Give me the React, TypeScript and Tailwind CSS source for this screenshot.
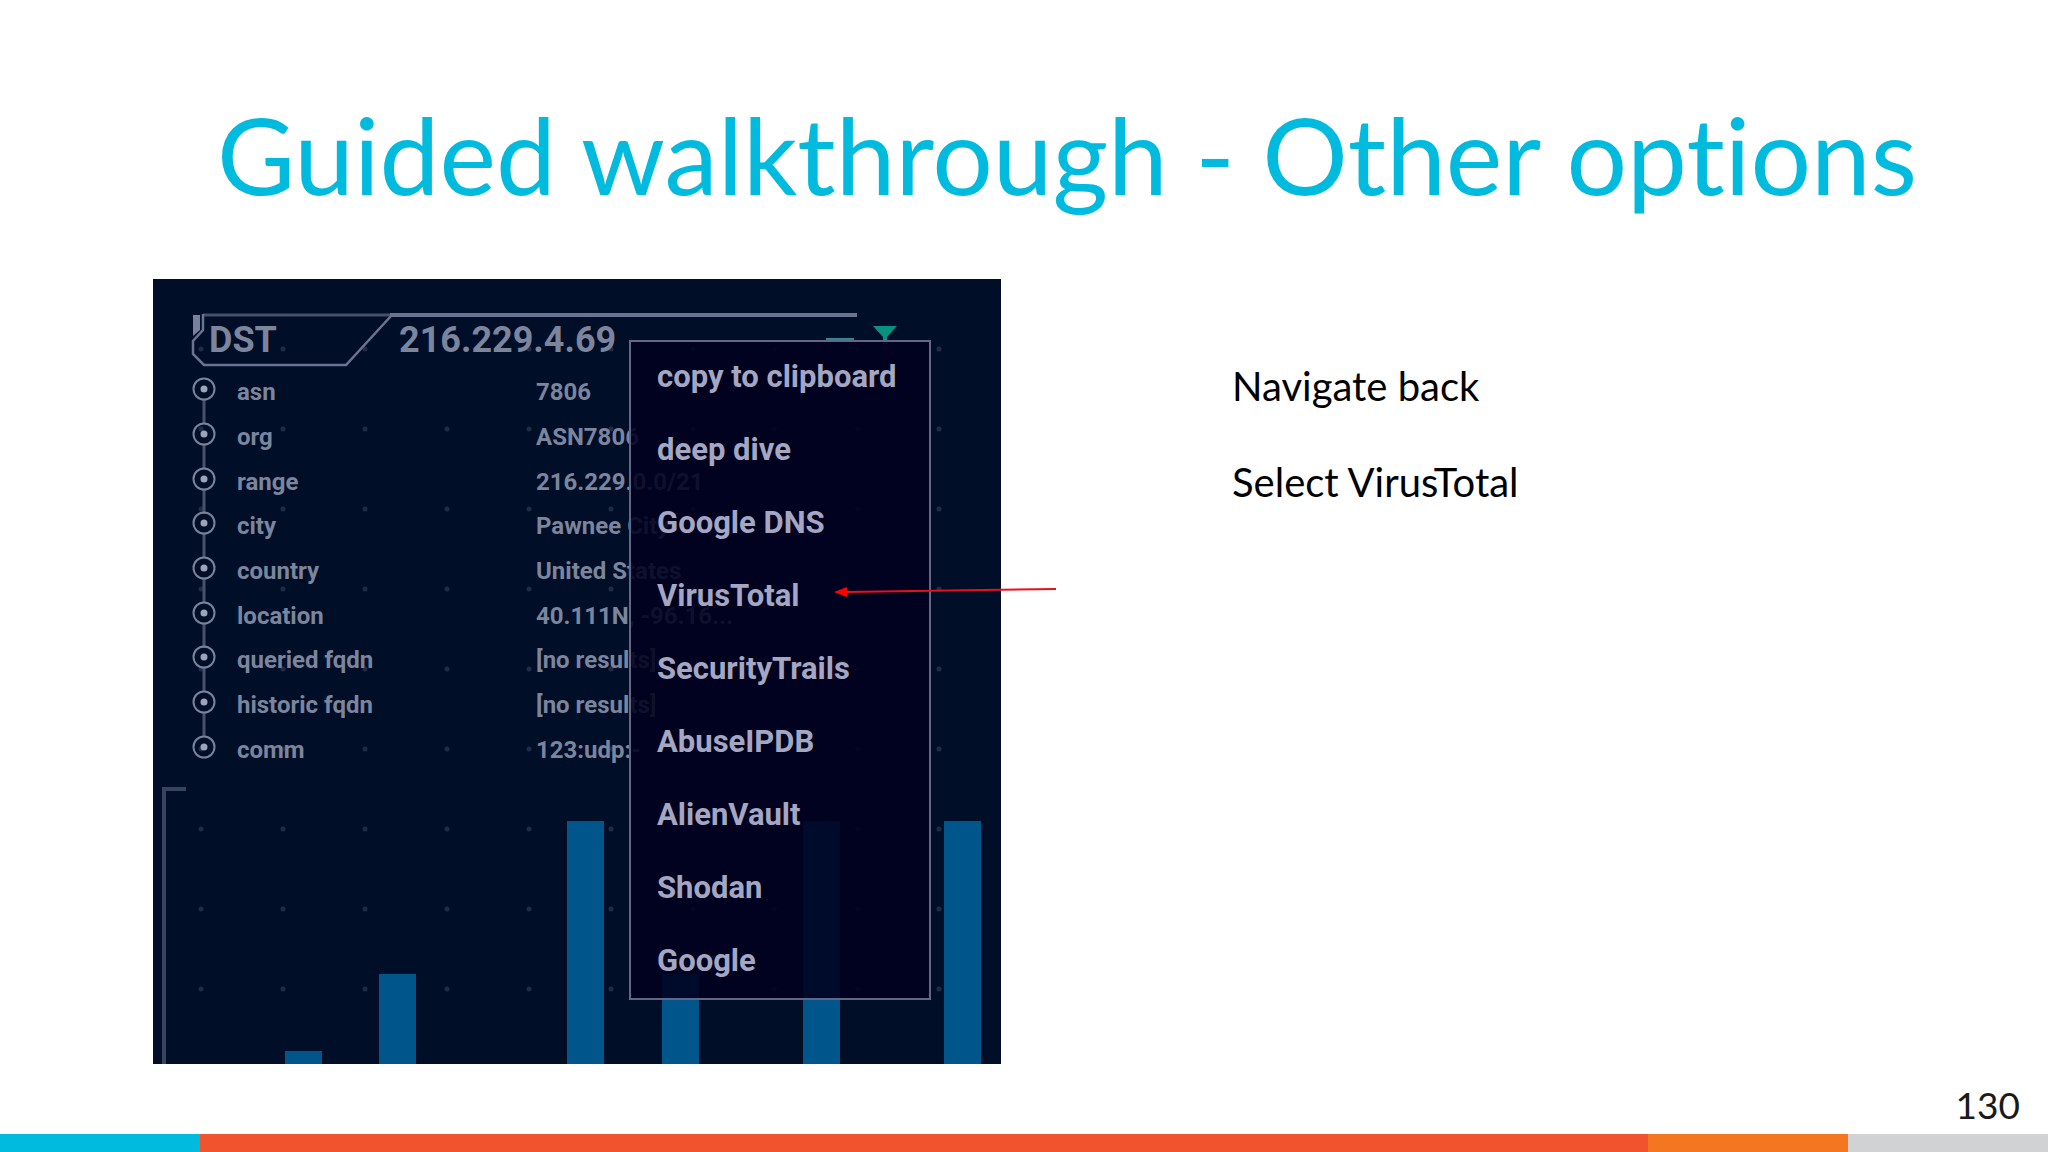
const details = [
  { label: "asn", value: "7806" },
  { label: "org", value: "ASN7806" },
  { label: "range", value: "216.229.0.0/21" },
  { label: "city", value: "Pawnee City" },
  { label: "country", value: "United States" },
  { label: "location", value: "40.111N, -96.16..." },
  { label: "queried fqdn", value: "[no results]" },
  { label: "historic fqdn", value: "[no results]" },
  { label: "comm", value: "123:udp:-" },
];

const menuItems = [
  "copy to clipboard",
  "deep dive",
  "Google DNS",
  "VirusTotal",
  "SecurityTrails",
  "AbuseIPDB",
  "AlienVault",
  "Shodan",
  "Google",
];

// bar heights in pixels, zero leaves the slot empty
const bars = [13, 0, 90, 0, 0, 0, 243, 0, 90, 0, 0, 243, 0, 0, 243];

function DotGrid() {
  return (
    <svg className="absolute inset-0 h-full w-full" aria-hidden="true">
      <defs>
        <pattern id="dots" x="7" y="29" width="82" height="80" patternUnits="userSpaceOnUse">
          <circle cx="41" cy="41" r="2.5" fill="#1f2b47" />
        </pattern>
      </defs>
      <rect width="100%" height="100%" fill="url(#dots)" />
    </svg>
  );
}

function HeaderFrame() {
  return (
    <svg
      className="absolute left-9 top-8 h-[60px] w-[720px]"
      viewBox="0 0 720 60"
      fill="none"
      aria-hidden="true"
    >
      <path d="M14 4H202" stroke="#465069" strokeWidth="3" />
      <path d="M201 4H668" stroke="#6c7391" strokeWidth="4" />
      <path
        d="M14 3V19L4 30V43L15 54H157L202 5"
        stroke="#6c7391"
        strokeWidth="2.5"
      />
      <path d="M4 4H11V19L4 25Z" fill="#7a819c" />
      <path d="M684 15H708L698 26V33H694V26Z" fill="#07927f" />
      <path d="M637 29H665" stroke="#2c8a8c" strokeWidth="4" />
    </svg>
  );
}

function DetailRow({ label, value, last }: { label: string; value: string; last: boolean }) {
  return (
    <div className="flex min-h-0 flex-1 items-center">
      <dt className="flex w-[345px] items-center gap-5">
        <svg width="26" height="44" viewBox="0 0 26 44" className="overflow-visible" aria-hidden="true">
          {!last && <path d="M13 30V54" stroke="#48526c" strokeWidth="3" />}
          <circle cx="13" cy="19" r="10.5" stroke="#7a839d" strokeWidth="2" fill="none" />
          <circle cx="13" cy="19" r="3.5" fill="#9ba4bb" />
        </svg>
        {label}
      </dt>
      <dd className="whitespace-nowrap">{value}</dd>
    </div>
  );
}

function ContextMenu() {
  return (
    <div
      role="menu"
      className="absolute left-[476px] top-[61px] flex h-[660px] w-[302px] flex-col border-2 border-[#626786] bg-[#00001e]/88"
    >
      {menuItems.map((item) => (
        <button
          key={item}
          role="menuitem"
          className="flex-1 whitespace-nowrap pb-[2px] pl-[26px] text-left text-[31px] font-bold leading-7 text-[#a5a6c1]"
        >
          {item}
        </button>
      ))}
    </div>
  );
}

function Arrow() {
  return (
    <svg
      className="absolute left-[680px] top-[300px] h-6 w-[224px]"
      viewBox="0 0 224 24"
      aria-hidden="true"
    >
      <path d="M223 10L12 13" stroke="#e8101c" strokeWidth="2" />
      <path d="M1 13L14 8V18Z" fill="#ff0000" />
    </svg>
  );
}

function HostPanel() {
  return (
    <section className="relative flex h-[785px] flex-col bg-[#000e28] font-['Roboto',sans-serif] font-bold text-[#7c859c]">
      <DotGrid />
      <HeaderFrame />
      <h2 className="relative flex pl-14 pt-[39px] text-4xl leading-[44px]">
        <span className="w-[190px]">DST</span>
        <span>216.229.4.69</span>
      </h2>
      <dl className="relative mt-2 flex h-[402px] flex-col pl-[38px] text-2xl leading-7">
        {details.map((d, i) => (
          <DetailRow key={d.label} {...d} last={i === details.length - 1} />
        ))}
      </dl>
      <div className="relative ml-[9px] mt-auto flex h-[277px] items-end gap-[10px] border-l-4 border-[#38445f] pl-[119px] pr-5">
        <div className="absolute left-0 top-0 h-1 w-5 bg-[#38445f]" />
        {bars.map((height, i) => (
          <div key={i} className="flex-1 bg-[#00568a]" style={{ height }} />
        ))}
      </div>
      <ContextMenu />
      <Arrow />
    </section>
  );
}

export default function App() {
  return (
    <div className="flex min-h-screen flex-col bg-white font-['Lato',sans-serif] [font-variant-ligatures:none]">
      <h1 className="pl-[217px] pt-[91px] text-[107px] leading-[125px] text-[#00bbdd]">
        Guided walkthrough - Other options
      </h1>
      <main className="mt-[63px] grid grid-cols-[848fr_816fr] gap-[231px] pl-[153px]">
        <HostPanel />
        <div className="flex flex-col gap-12 pt-[83px] text-[40px] leading-[48px] text-black">
          <p>Navigate back</p>
          <p>Select VirusTotal</p>
        </div>
      </main>
      <footer className="mt-auto">
        <p className="pb-[7px] pr-7 text-right text-[37px] leading-[44px] text-[#1a1a1a]">130</p>
        <div className="flex h-[18px]">
          <div className="w-[200px] bg-[#00bbdd]" />
          <div className="flex-1 bg-[#f1532e]" />
          <div className="w-[200px] bg-[#f47621]" />
          <div className="w-[200px] bg-[#d0d2d3]" />
        </div>
      </footer>
    </div>
  );
}
